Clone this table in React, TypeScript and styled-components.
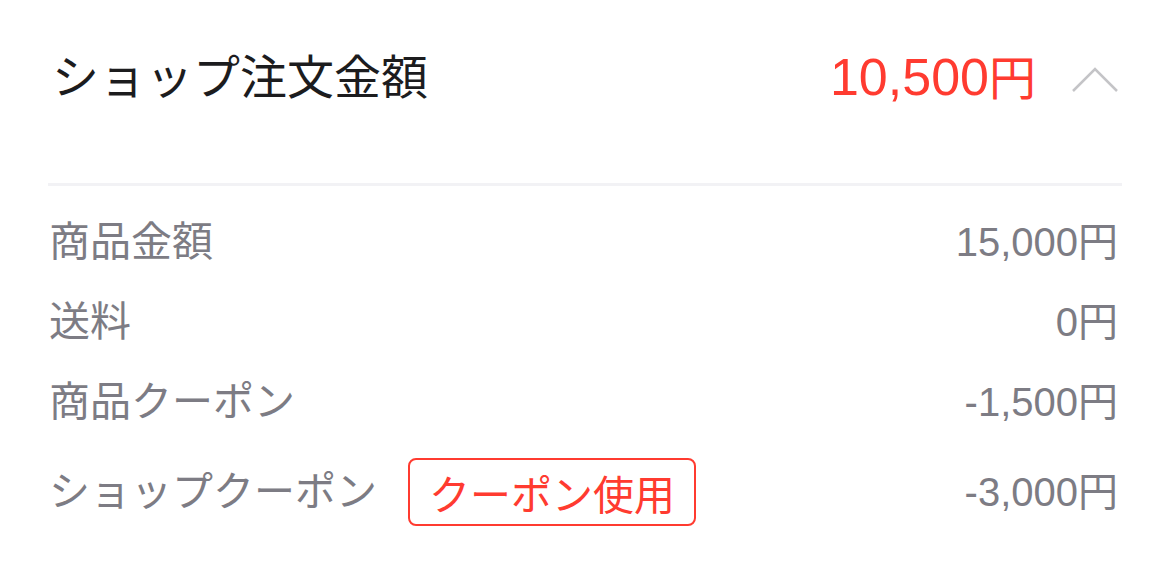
import styled, { createGlobalStyle } from 'styled-components';

const GlobalStyle = createGlobalStyle`
  html, body {
    margin: 0;
    padding: 0;
    background: #ffffff;
  }
  body {
    font-family: "Liberation Sans", "Noto Sans CJK JP", sans-serif;
  }
`;

const Panel = styled.div`
  width: 1170px;
  padding: 0 48px;
  box-sizing: border-box;
`;

const Header = styled.div`
  display: flex;
  align-items: center;
  height: 156px;
  margin-bottom: 27px;
  padding: 0 4px;
`;

const Title = styled.h1`
  flex: 1;
  margin: 0;
  font-size: 47px;
  font-weight: 400;
  line-height: 56px;
  color: #1c1c1e;
`;

const Total = styled.span`
  font-size: 52px;
  line-height: 60px;
  color: #ff3b30;
  margin-right: 36px;
`;

const Yen = styled.span`
  font-size: 47px;
`;

const Chevron = styled.svg`
  width: 46px;
  height: 26px;
  margin-top: 4px;
`;

const Divider = styled.div`
  height: 3px;
  background: #f2f2f5;
`;

const List = styled.div`
  padding-top: 16px;
`;

const Row = styled.div`
  display: flex;
  align-items: center;
  padding: 16px 4px 16px 1px;
  min-height: 48px;
`;

const Label = styled.span`
  font-size: 41px;
  line-height: 48px;
  color: #7d7c84;
`;

const Value = styled.span`
  margin-left: auto;
  font-size: 40px;
  line-height: 48px;
  color: #7d7c84;
`;

const CouponButton = styled.button`
  margin-left: 31px;
  height: 68px;
  padding: 0 19px;
  box-sizing: border-box;
  border: 2px solid #ff3b30;
  border-radius: 8px;
  background: #ffffff;
  color: #ff3b30;
  font-family: "Noto Sans CJK JP", sans-serif;
  font-size: 41px;
  line-height: 48px;
  cursor: pointer;
`;

const rows = [
  { label: '商品金額', value: '15,000円' },
  { label: '送料', value: '0円' },
  { label: '商品クーポン', value: '-1,500円' },
];

export default function App() {
  return (
    <>
      <GlobalStyle />
      <Panel>
        <Header>
          <Title>ショップ注文金額</Title>
          <Total>
            10,500<Yen>円</Yen>
          </Total>
          <Chevron viewBox="0 0 46 26" fill="none">
            <polyline points="1,24 23,2 45,24" stroke="#c4c4c7" strokeWidth="2.5" />
          </Chevron>
        </Header>
        <Divider />
        <List>
          {rows.map((r) => (
            <Row key={r.label}>
              <Label>{r.label}</Label>
              <Value>{r.value}</Value>
            </Row>
          ))}
          <Row>
            <Label>ショップクーポン</Label>
            <CouponButton>クーポン使用</CouponButton>
            <Value>-3,000円</Value>
          </Row>
        </List>
      </Panel>
    </>
  );
}
